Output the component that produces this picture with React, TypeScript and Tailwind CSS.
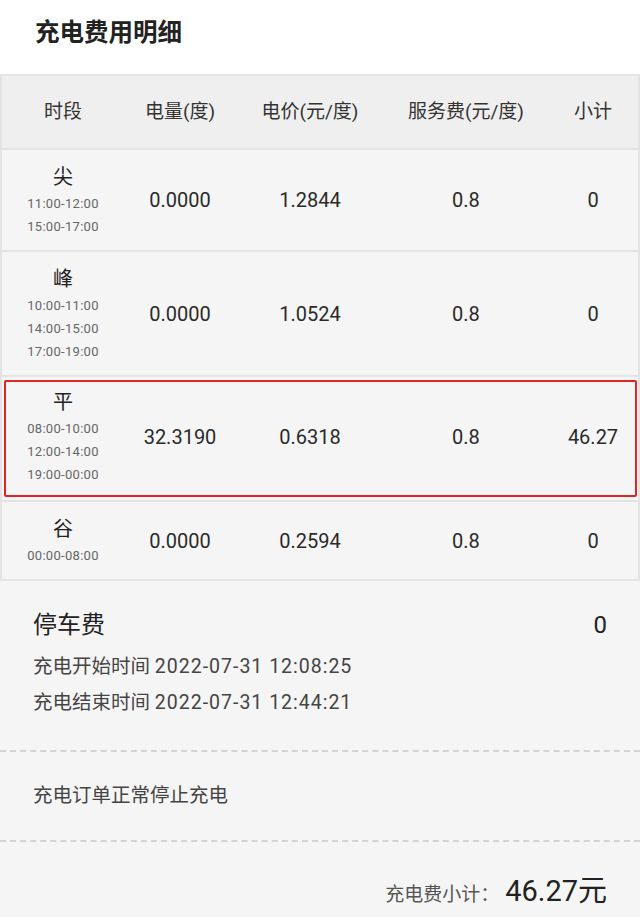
import React from "react";

type Row = {
  name: string;
  times: string[];
  kwh: string;
  price: string;
  service: string;
  subtotal: string;
  active?: boolean;
};

const rows: Row[] = [
  { name: "尖", times: ["11:00-12:00", "15:00-17:00"], kwh: "0.0000", price: "1.2844", service: "0.8", subtotal: "0" },
  { name: "峰", times: ["10:00-11:00", "14:00-15:00", "17:00-19:00"], kwh: "0.0000", price: "1.0524", service: "0.8", subtotal: "0" },
  { name: "平", times: ["08:00-10:00", "12:00-14:00", "19:00-00:00"], kwh: "32.3190", price: "0.6318", service: "0.8", subtotal: "46.27", active: true },
  { name: "谷", times: ["00:00-08:00"], kwh: "0.0000", price: "0.2594", service: "0.8", subtotal: "0" },
];

const cols = "grid grid-cols-[122px_112px_148px_164px_1fr] items-center";

function PeriodRow({ row }: { row: Row }) {
  const cells = (
    <div className={cols}>
      <div className="flex flex-col items-center">
        <span className="text-[20px] leading-[30px] text-[#222]">{row.name}</span>
        {row.times.map((t) => (
          <span key={t} className="text-[13px] leading-[23px] tracking-[0.3px] text-[#666]">
            {t}
          </span>
        ))}
      </div>
      <div className="text-center text-[20px] text-[#2a2a2a]">{row.kwh}</div>
      <div className="text-center text-[20px] text-[#2a2a2a]">{row.price}</div>
      <div className="text-center text-[20px] text-[#2a2a2a]">{row.service}</div>
      <div className="text-center text-[20px] text-[#2a2a2a]">{row.subtotal}</div>
    </div>
  );

  if (row.active) {
    return (
      <div className="border-b-2 border-[#e4e4e4] pl-[2px] pr-[1px] py-[3px]">
        <div className="border-2 border-[#e12424] rounded-[2px] pt-[5px] pb-[9px]">
          <div className="-ml-[4px] -mr-[3px]">{cells}</div>
        </div>
      </div>
    );
  }

  return <div className="border-b-2 border-[#e4e4e4] py-[12px]">{cells}</div>;
}

export default function App() {
  return (
    <div
      className="w-[640px] h-[917px] overflow-hidden bg-[#f5f5f5]"
      style={{ fontFamily: 'Roboto, "Noto Sans CJK SC", sans-serif' }}
    >
      <div className="bg-white h-[74px] pl-[35px] pt-[17px]">
        <h1 className="text-[24.5px] leading-[32px] font-bold text-[#222]">充电费用明细</h1>
      </div>

      <div className="border-x-2 border-t-2 border-[#e4e4e4]">
        <div className={`${cols} h-[74px] bg-[#efefef] border-b-2 border-[#e4e4e4] text-[19px] text-[#333]`}>
          <div className="text-center">时段</div>
          <div className="text-center">电量(度)</div>
          <div className="text-center">电价(元/度)</div>
          <div className="text-center">服务费(元/度)</div>
          <div className="text-center">小计</div>
        </div>
        {rows.map((r) => (
          <PeriodRow key={r.name} row={r} />
        ))}
      </div>

      <div className="px-[33px] pt-[27px] pb-[29px]">
        <div className="flex items-center justify-between">
          <span className="text-[24px] leading-[34px] text-[#222]">停车费</span>
          <span className="text-[24px] leading-[34px] text-[#222]">0</span>
        </div>
        <div className="mt-[7px] text-[19.5px] leading-[36px] text-[#444]">
          充电开始时间 <span className="tracking-[1px]">2022-07-31 12:08:25</span>
        </div>
        <div className="text-[19.5px] leading-[36px] text-[#444]">
          充电结束时间 <span className="tracking-[1px]">2022-07-31 12:44:21</span>
        </div>
      </div>

      <div className="border-t-2 border-dashed border-[#d4d4d4]" />
      <div className="h-[88px] flex items-center px-[33px] text-[19.5px] text-[#444]">充电订单正常停止充电</div>
      <div className="border-t-2 border-dashed border-[#d4d4d4]" />

      <div className="flex items-baseline justify-end pr-[33px] pt-[28px]">
        <span className="text-[19px] text-[#555]">充电费小计：</span>
        <span className="text-[29px] text-[#222] ml-[6px]">46.27元</span>
      </div>
    </div>
  );
}
